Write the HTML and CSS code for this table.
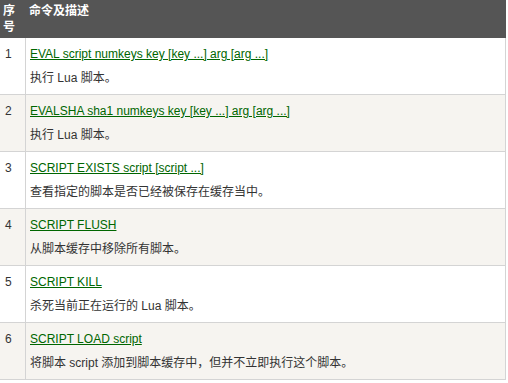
FILE: index.html
```html
<!DOCTYPE html>
<html lang="zh-CN">
<head>
<meta charset="utf-8">
<title>Redis 脚本命令</title>
<link rel="stylesheet" href="styles.css">
</head>
<body>
<table class="reference">
  <colgroup>
    <col class="col-num">
    <col class="col-cmd">
  </colgroup>
  <thead>
    <tr><th>序号</th><th>命令及描述</th></tr>
  </thead>
  <tbody>
    <tr><td>1</td><td><a href="#">EVAL script numkeys key [key ...] arg [arg ...]</a><br>执行 Lua 脚本。</td></tr>
    <tr><td>2</td><td><a href="#">EVALSHA sha1 numkeys key [key ...] arg [arg ...]</a><br>执行 Lua 脚本。</td></tr>
    <tr><td>3</td><td><a href="#">SCRIPT EXISTS script [script ...]</a><br>查看指定的脚本是否已经被保存在缓存当中。</td></tr>
    <tr><td>4</td><td><a href="#">SCRIPT FLUSH</a><br>从脚本缓存中移除所有脚本。</td></tr>
    <tr><td>5</td><td><a href="#">SCRIPT KILL</a><br>杀死当前正在运行的 Lua 脚本。</td></tr>
    <tr><td>6</td><td><a href="#">SCRIPT LOAD script</a><br>将脚本 script 添加到脚本缓存中，但并不立即执行这个脚本。</td></tr>
  </tbody>
</table>
</body>
</html>
```
FILE: styles.css
```css
html, body {
  margin: 0;
  padding: 0;
  background: #fff;
}

body {
  font-family: "Liberation Sans", Arial, "Noto Sans CJK SC", sans-serif;
  font-size: 12px;
  color: #333;
}

.reference {
  width: 506px;
  border-collapse: separate;
  border-spacing: 0;
  table-layout: fixed;
}

.col-num {
  width: 26px;
}

.reference th {
  background: #555;
  color: #fff;
  font-weight: bold;
  text-align: left;
  vertical-align: top;
  padding: 3px;
  line-height: 16px;
  height: 32px;
}

.reference td {
  vertical-align: top;
  line-height: 24px;
  padding: 4px 4px 4px 5px;
  border-right: 1px solid #d4d4d4;
  border-bottom: 1px solid #d4d4d4;
}

.reference td + td {
  padding-left: 4px;
}

.reference tbody tr:nth-child(even) {
  background: #f6f4f0;
}

.reference a {
  color: #060;
  text-decoration: underline;
}
```
